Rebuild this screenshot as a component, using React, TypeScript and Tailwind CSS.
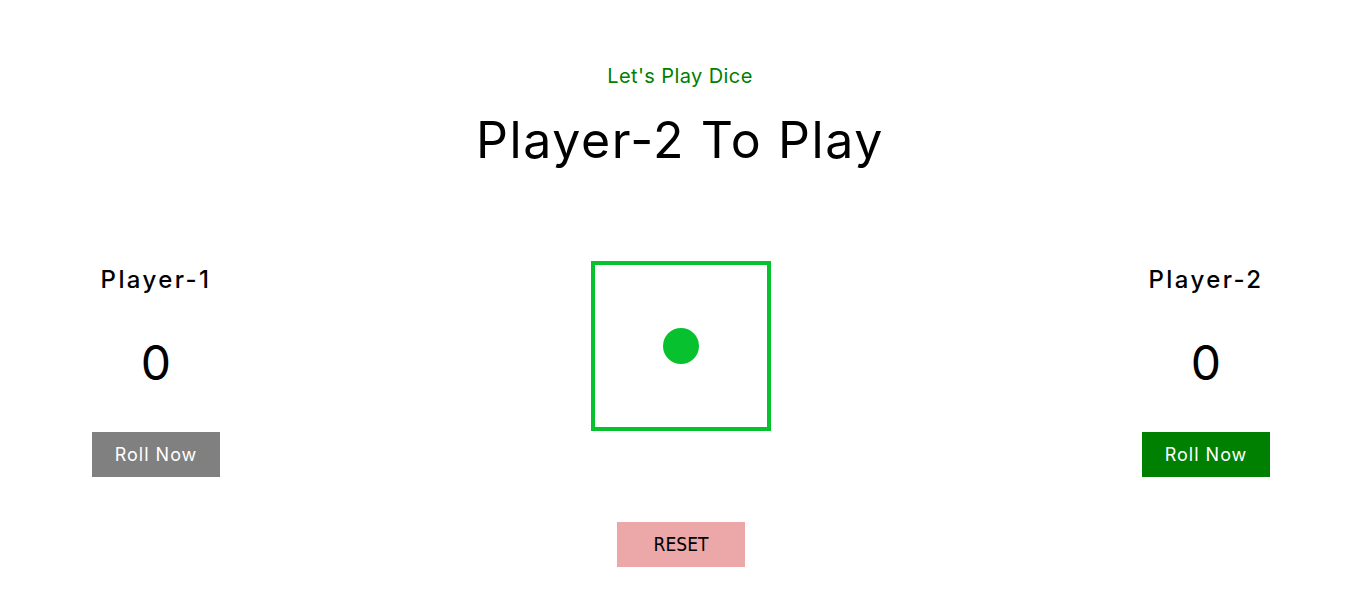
import React, { useState } from "react";

const App = () => {
    const [scores] = useState([0, 0]);
    const current = 2;

    return (
        <div className="min-h-[609px] w-full bg-white pt-[61px] text-center font-['Inter',sans-serif] text-black">
            {/* Heading */}
            <p className="text-[20px] leading-[30px] tracking-[0.4px] text-[#008000]">Let's Play Dice</p>
            <h1 className="mt-[19px] text-[50px] leading-[60px] tracking-[1.6px]">Player-{current} To Play</h1>

            {/* Board */}
            <div className="mt-[91px] flex items-start justify-between pl-[92px] pr-[90px]">
                <div className="flex w-[128px] flex-col items-center pt-[1px]">
                    <h2 className="text-[24px] leading-[36px] font-medium tracking-[2.4px]">Player-1</h2>
                    <p className="mt-[35px] text-[48px] leading-[60px]">{scores[0]}</p>
                    <button className="mt-[39px] h-[45px] w-[128px] bg-[#808080] text-[18px] tracking-[1px] text-white">
                        Roll Now
                    </button>
                </div>

                <div className="flex h-[170px] w-[180px] items-center justify-center border-4 border-[#08c12f]">
                    <div className="h-[36px] w-[36px] rounded-full bg-[#08c12f]" />
                </div>

                <div className="flex w-[128px] flex-col items-center pt-[1px]">
                    <h2 className="text-[24px] leading-[36px] font-medium tracking-[2.4px]">Player-2</h2>
                    <p className="mt-[35px] text-[48px] leading-[60px]">{scores[1]}</p>
                    <button className="mt-[39px] h-[45px] w-[128px] bg-[#008000] text-[18px] tracking-[1px] text-white">
                        Roll Now
                    </button>
                </div>
            </div>

            <button className="ml-[2px] mt-[45px] h-[45px] w-[128px] bg-[#eca8a8] font-['Liberation_Sans_Narrow','DejaVu_Sans_Condensed',Roboto,sans-serif] text-[19px] text-black">
                RESET
            </button>
        </div>
    );
};

export default App;
